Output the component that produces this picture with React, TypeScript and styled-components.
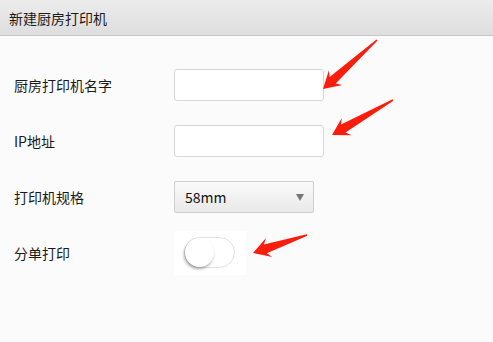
import React, { useState } from "react";
import styled, { createGlobalStyle } from "styled-components";

const Global = createGlobalStyle`
  html, body { margin: 0; padding: 0; background: #fbfbfb; }
  body { font-family: "Microsoft YaHei", "Noto Sans CJK SC", "Noto Sans", sans-serif; color: #222; }
`;

const Page = styled.div`
  position: relative;
  width: 493px;
  height: 342px;
  background: #fbfbfb;
  overflow: hidden;
`;

const Header = styled.div`
  height: 35px;
  display: flex;
  align-items: center;
  padding-left: 9px;
  background: linear-gradient(#ececec, #dedede);
  border-bottom: 1px solid #c6c6c6;
  font-size: 14px;
  color: #1a1a1a;
`;

const Form = styled.div`
  padding-top: 21px;
  display: flex;
  flex-direction: column;
`;

const Row = styled.div`
  height: 56px;
  display: flex;
  align-items: center;
`;

const Label = styled.div`
  width: 174px;
  flex-shrink: 0;
  box-sizing: border-box;
  padding-left: 14px;
  font-size: 14px;
  color: #1a1a1a;
`;

const TextInput = styled.input`
  width: 150px;
  height: 32px;
  box-sizing: border-box;
  border: 1px solid #d6d6d6;
  border-radius: 3px;
  background: #fff;
  outline: none;
  padding: 0 8px;
  font-size: 14px;
`;

const Select = styled.div`
  width: 140px;
  height: 32px;
  box-sizing: border-box;
  border: 1px solid #cfcfcf;
  border-radius: 2px;
  background: linear-gradient(#fafafa, #e9e9e9);
  display: flex;
  align-items: center;
  justify-content: space-between;
  padding: 0 8px 0 10px;
  font-size: 14px;
  color: #111;
`;

const Caret = styled.span`
  width: 0;
  height: 0;
  border-left: 4px solid transparent;
  border-right: 4px solid transparent;
  border-top: 7px solid #777;
  margin-right: 1px;
`;

const SwitchBox = styled.div`
  width: 72px;
  height: 44px;
  background: #fff;
  display: flex;
  align-items: center;
  padding-left: 10px;
  box-sizing: border-box;
  margin-top: -1px;
`;

const Track = styled.div<{ $on: boolean }>`
  position: relative;
  width: 51px;
  height: 31px;
  box-sizing: border-box;
  border-radius: 16px;
  border: 1px solid #e2e2e2;
  background: ${(p) => (p.$on ? "#4cd964" : "#fff")};
  cursor: pointer;
`;

const Knob = styled.div<{ $on: boolean }>`
  position: absolute;
  top: 0;
  left: ${(p) => (p.$on ? "20px" : "0")};
  width: 29px;
  height: 29px;
  border-radius: 50%;
  background: #fff;
  box-shadow: -1px 2px 3px rgba(0, 0, 0, 0.35);
`;

const Overlay = styled.svg`
  position: absolute;
  left: 0;
  top: 0;
  pointer-events: none;
`;

type P = [number, number];

function arrow(tip: P, tail: P): string {
  const dx = tail[0] - tip[0];
  const dy = tail[1] - tip[1];
  const L = Math.hypot(dx, dy);
  const u: P = [dx / L, dy / L];
  const v: P = [-u[1], u[0]];
  const local: P[] = [
    [0, 0],
    [17, -10],
    [13, -4.5],
    [L, -0.8],
    [L, 0.8],
    [13, 4.5],
    [17, 10],
  ];
  return local
    .map(([a, c]) => `${(tip[0] + u[0] * a + v[0] * c).toFixed(1)},${(tip[1] + u[1] * a + v[1] * c).toFixed(1)}`)
    .join(" ");
}

export default function App() {
  const [on, setOn] = useState(false);
  return (
    <Page>
      <Global />
      <Header>新建厨房打印机</Header>
      <Form>
        <Row>
          <Label>厨房打印机名字</Label>
          <TextInput />
        </Row>
        <Row>
          <Label>IP地址</Label>
          <TextInput />
        </Row>
        <Row>
          <Label>打印机规格</Label>
          <Select>
            <span>58mm</span>
            <Caret />
          </Select>
        </Row>
        <Row>
          <Label>分单打印</Label>
          <SwitchBox>
            <Track $on={on} onClick={() => setOn(!on)}>
              <Knob $on={on} />
            </Track>
          </SwitchBox>
        </Row>
      </Form>
      <Overlay width={493} height={342}>
        <polygon points={arrow([323, 89], [377, 40])} fill="#fb1d0c" />
        <polygon points={arrow([332, 135], [393, 100])} fill="#fb1d0c" />
        <polygon points={arrow([253, 253], [307, 235])} fill="#fb1d0c" />
      </Overlay>
    </Page>
  );
}
